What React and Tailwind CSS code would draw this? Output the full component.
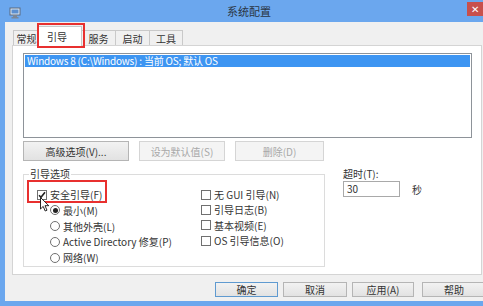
import React from 'react'

const font="font-['Noto_Sans_CJK_SC','Noto_Sans',sans-serif]"

function Check({checked}){
return(
<span className="w-[10px] h-[10px] border border-[#707070] bg-white flex items-center justify-center shrink-0">
{checked&&(
<svg width="8" height="8" viewBox="0 0 8 8">
<path d="M1 4.2 L3 6.3 L7 1.2" fill="none" stroke="#222" strokeWidth="1.6"/>
</svg>
)}
</span>
)
}

function Radio({checked}){
return(
<span className="w-[10px] h-[10px] rounded-full border border-[#707070] bg-white flex items-center justify-center shrink-0">
{checked&&<span className="w-[5px] h-[5px] rounded-full bg-[#222]"/>}
</span>
)
}

function Btn({children,disabled,def,w}){
return(
<div className={
`${w} h-full flex items-center justify-center border text-[10px] ${
disabled
?'border-[#d5d5d5] bg-[#f4f4f4] text-[#a8a8a8]'
:def
?'border-[#5f9ad0] bg-gradient-to-b from-[#f2f2f2] to-[#e2e2e2] text-[#333]'
:'border-[#b5b5b5] bg-gradient-to-b from-[#f2f2f2] to-[#e2e2e2] text-[#333]'
}`
}>
{children}
</div>
)
}

export default function App(){

const tabs=['常规','引导','服务','启动','工具']

return(
<div className={`w-[483px] h-[306px] bg-[#6ba7ee] flex flex-col relative overflow-hidden ${font}`}>

{/* title bar */}
<div className="h-[22px] flex items-start relative shrink-0">
<svg className="ml-[9px] mt-[7px]" width="12" height="12" viewBox="0 0 12 12">
<rect x="1" y="1" width="10" height="7" fill="#dfe8f3" stroke="#5a6a80"/>
<rect x="2.5" y="2.5" width="7" height="4" fill="#5b8fd0"/>
<rect x="4" y="8" width="4" height="2" fill="#7a8798"/>
<rect x="2.5" y="10" width="7" height="1.5" fill="#7a8798"/>
</svg>
<div className="flex-1 text-center text-[11px] text-[#2a3544] pt-[3px] pl-[10px]">系统配置</div>
<div className="w-[16px] h-[14px] mt-[2px] bg-[#c8504c] flex items-center justify-center text-white text-[10px] leading-none">✕</div>
</div>

{/* body */}
<div className="ml-[5px] mb-[5px] flex-1 bg-[#f0f0f0] flex flex-col text-[#333]">

{/* tabs */}
<div className="h-[23px] flex items-end pl-[8px] shrink-0 relative z-10">
{tabs.map((t,i)=>(
i===1
?<div key={t} className="w-[44px] h-[20px] -ml-[2px] -mb-px bg-white border border-b-0 border-[#c9c9c9] text-[10px] flex items-start justify-center pt-[2px] pr-[6px]">{t}</div>
:<div key={t} className={`${i===0?'w-[27px]':i===4?'w-[34px]':'w-[35px]'} h-[15px] ${i>0?'-ml-px':''} bg-[#f0f0f0] border border-b-0 border-[#c9c9c9] text-[10px] flex items-center justify-center`}>{t}</div>
))}
</div>

{/* panel */}
<div className="ml-[7px] w-[470px] h-[230px] bg-white border border-[#d4d4d4] shrink-0 pl-[10px] pt-[7px] flex flex-col">

<div className="w-[449px] h-[85px] border border-[#8e9399] p-px">
<div className="h-[12px] bg-[#3d95f2] text-white text-[10px] leading-[12px] pl-[2px] tracking-[-0.2px]">Windows 8 (C:\Windows) : 当前 OS; 默认 OS</div>
</div>

<div className="h-[20px] mt-[3px] flex gap-[10px] text-[10px]">
<Btn w="w-[106px]">高级选项(V)...</Btn>
<Btn w="w-[86px]" disabled>设为默认值(S)</Btn>
<Btn w="w-[89px]" disabled>删除(D)</Btn>
</div>

<div className="mt-[6px] flex items-start">

<div className="mt-[7px] w-[302px] h-[93px] border border-[#dcdcdc] relative flex text-[10px]">
<span className="absolute -top-[8px] left-[5px] bg-white px-[1px] text-[10px] leading-[14px]">引导选项</span>

<div className="pl-[13px] pt-[12px] flex flex-col w-[177px]">
<div className="h-[15px] flex items-center gap-[3px]"><Check checked/><span>安全引导(F)</span></div>
<div className="pl-[13px] flex flex-col">
<div className="h-[16px] flex items-center gap-[3px]"><Radio checked/><span>最小(M)</span></div>
<div className="h-[16px] flex items-center gap-[3px]"><Radio/><span>其他外壳(L)</span></div>
<div className="h-[15px] flex items-center gap-[3px]"><Radio/><span>Active Directory 修复(P)</span></div>
<div className="h-[17px] flex items-center gap-[3px]"><Radio/><span>网络(W)</span></div>
</div>
</div>

<div className="pt-[12px] flex flex-col">
<div className="h-[15px] flex items-center gap-[3px]"><Check/><span>无 GUI 引导(N)</span></div>
<div className="h-[15px] flex items-center gap-[3px]"><Check/><span>引导日志(B)</span></div>
<div className="h-[16px] flex items-center gap-[3px]"><Check/><span>基本视频(E)</span></div>
<div className="h-[15px] flex items-center gap-[3px]"><Check/><span>OS 引导信息(O)</span></div>
</div>
</div>

<div className="ml-[18px] flex flex-col text-[10px]">
<span className="leading-[13px]">超时(T):</span>
<div className="flex items-center mt-[1px]">
<div className="w-[57px] h-[16px] border border-[#a9a9a9] bg-white pl-[3px] leading-[14px]">30</div>
<span className="ml-[12px]">秒</span>
</div>
</div>

</div>
</div>

{/* bottom buttons */}
<div className="h-[15px] mt-[7px] pl-[210px] flex text-[10px] shrink-0">
<Btn w="w-[63px] shrink-0" def>确定</Btn>
<div className="w-[5px] shrink-0"/>
<Btn w="w-[64px] shrink-0">取消</Btn>
<div className="w-[5px] shrink-0"/>
<Btn w="w-[62px] shrink-0">应用(A)</Btn>
<div className="w-[8px] shrink-0"/>
<Btn w="w-[64px] shrink-0">帮助</Btn>
</div>

</div>

{/* annotation boxes */}
<div className="absolute left-[37px] top-[23px] w-[48px] h-[25px] border-2 border-[#e8302f] z-20"/>
<div className="absolute left-[27px] top-[180px] w-[80px] h-[23px] border-2 border-[#e8302f] z-20"/>

{/* mouse cursor */}
<svg className="absolute left-[40px] top-[197px] z-20" width="10" height="15" viewBox="0 0 10 15">
<path d="M0.5 0.5 L0.5 12 L3.2 9.4 L5.2 14 L7 13.2 L5 8.7 L8.8 8.7 Z" fill="#fff" stroke="#111" strokeWidth="0.9"/>
</svg>

</div>
)
}
